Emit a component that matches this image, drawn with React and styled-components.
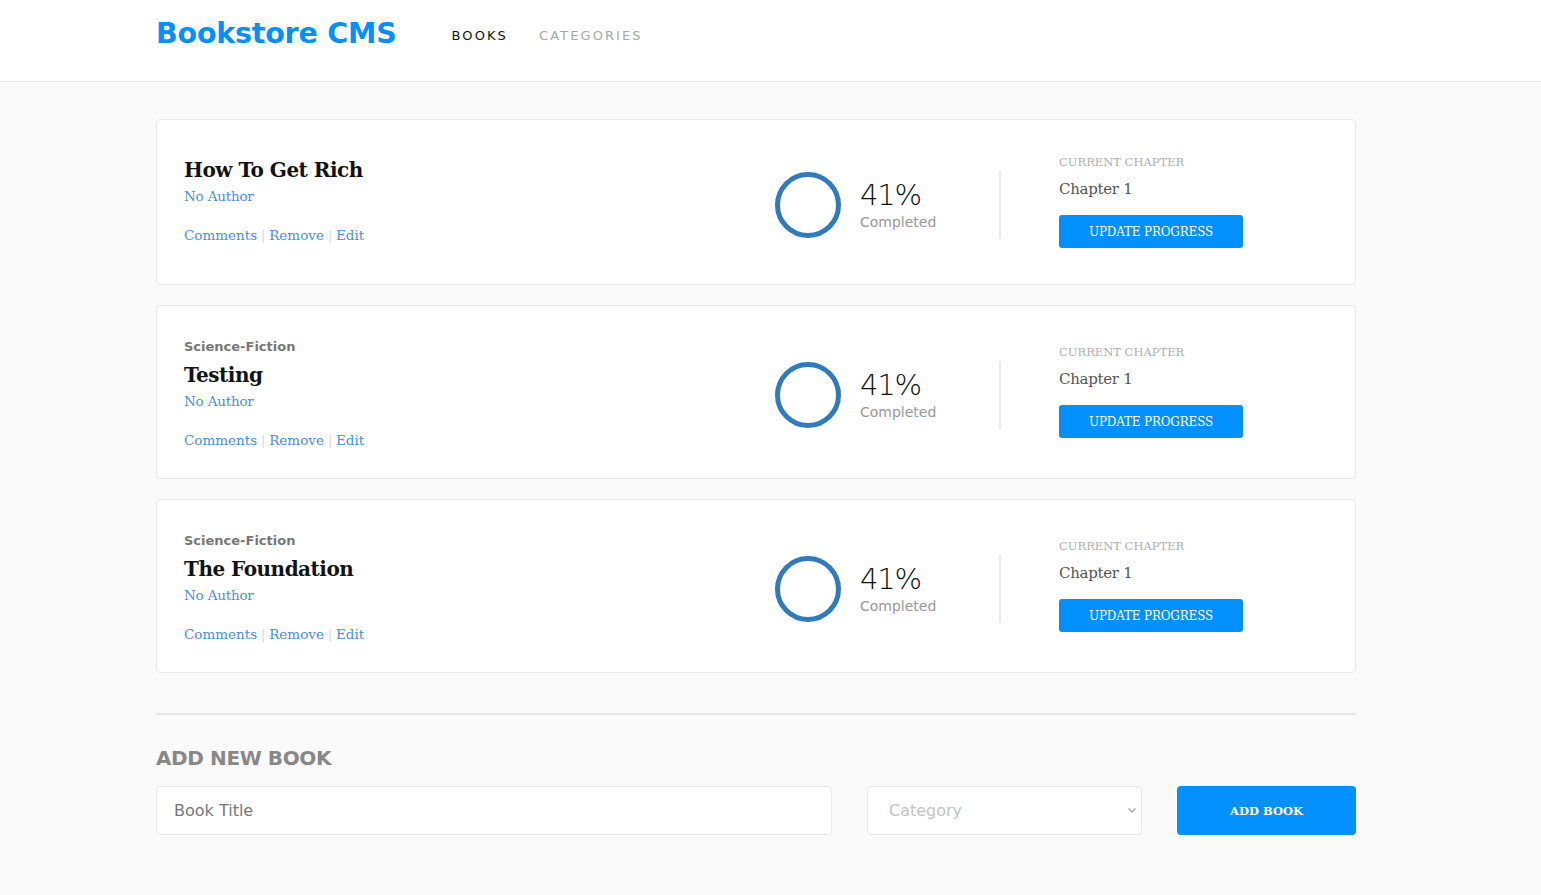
import React from "react";
import styled, { createGlobalStyle } from "styled-components";

const GlobalStyle = createGlobalStyle`
  body {
    margin: 0;
    background: #fafafa;
    font-family: "DejaVu Sans", "Open Sans", sans-serif;
  }
`;

const Header = styled.header`
  box-sizing: border-box;
  background: #fff;
  border-bottom: 1px solid #e8e8e8;
  height: 82px;
  display: flex;
  align-items: center;
  padding: 0 0 15px 156px;
`;

const Logo = styled.h1`
  margin: 0 55px 0 0;
  font-family: "DejaVu Sans", sans-serif;
  font-weight: 700;
  font-size: 28.5px;
  color: #0290ff;
  letter-spacing: -0.2px;
`;

const NavList = styled.ul`
  display: flex;
  gap: 31px;
  list-style: none;
  margin: 5px 0 0;
  padding: 0;
`;

const NavItem = styled.li`
  font-family: "DejaVu Sans", sans-serif;
  font-size: 13px;
  letter-spacing: 2.1px;
  color: ${(p) => (p.$active ? "#121212" : "#a8a8a8")};
`;

const Main = styled.main`
  width: 1200px;
  margin-left: 156px;
  padding: 37px 0 60px;
`;

const BookList = styled.div`
  display: flex;
  flex-direction: column;
  gap: 20px;
`;

const Card = styled.div`
  box-sizing: border-box;
  min-height: 166px;
  background: #fff;
  border: 1px solid #e8e8e8;
  border-radius: 4px;
  padding: 0 27px;
  display: flex;
  align-items: center;
`;

const Info = styled.div`
  flex: 1;
  display: flex;
  flex-direction: column;
  padding: ${(p) => (p.$withGenre ? "33px" : "26px")} 0 30px;
`;

const Genre = styled.div`
  font-family: "DejaVu Sans", sans-serif;
  font-weight: 700;
  font-size: 13px;
  color: #777;
  margin-bottom: 8px;
`;

const Title = styled.h2`
  margin: 0;
  font-family: "DejaVu Serif", serif;
  font-weight: 700;
  font-size: 20px;
  line-height: 26px;
  letter-spacing: -0.5px;
  color: #121212;
`;

const Author = styled.div`
  margin-top: 5px;
  font-family: "DejaVu Serif", serif;
  font-size: 13.5px;
  letter-spacing: -0.2px;
  color: #4a8de6;
`;

const Actions = styled.div`
  margin-top: 23px;
  display: flex;
  align-items: center;
  font-family: "DejaVu Serif", serif;
  font-size: 13.5px;
  letter-spacing: -0.3px;
  color: #4a8de6;
`;

const ActionLink = styled.button`
  border: none;
  background: none;
  padding: 0;
  font: inherit;
  color: inherit;
  cursor: pointer;
`;

const Sep = styled.span`
  color: #d8d8d8;
  margin: 0 4px;
  font-size: 13px;
`;

const Progress = styled.div`
  width: 224px;
  margin-top: 6px;
  display: flex;
  align-items: center;
  gap: 19px;
`;

const Percent = styled.div`
  font-family: "DejaVu Sans", sans-serif;
  font-weight: 300;
  font-size: 29px;
  letter-spacing: -1.2px;
  color: #121212;
  line-height: 1.1;
`;

const Completed = styled.div`
  font-family: "DejaVu Sans", sans-serif;
  font-size: 14px;
  color: #999;
  margin-top: 2px;
`;

const Divider = styled.div`
  width: 2px;
  height: 68px;
  margin-top: 6px;
  background: #e8e8e8;
`;

const Chapter = styled.div`
  width: 269px;
  padding-left: 58px;
  display: flex;
  flex-direction: column;
  align-items: flex-start;
`;

const ChapterLabel = styled.div`
  font-family: "DejaVu Serif", serif;
  font-size: 11.5px;
  line-height: 13px;
  color: #b0b0b0;
`;

const ChapterName = styled.div`
  margin-top: 11px;
  font-family: "DejaVu Serif", serif;
  font-size: 15px;
  line-height: 18px;
  letter-spacing: -0.3px;
  color: #555;
`;

const UpdateButton = styled.button`
  margin-top: 17px;
  width: 184px;
  height: 33px;
  border: none;
  border-radius: 3px;
  background: #0290ff;
  color: #fff;
  font-family: "DejaVu Serif", serif;
  font-size: 12px;
  letter-spacing: -0.2px;
  cursor: pointer;
`;

const Rule = styled.hr`
  margin: 40px 0 0;
  border: none;
  height: 2px;
  background: #e5e5e5;
`;

const FormTitle = styled.h3`
  margin: 31px 0 16px;
  font-family: "DejaVu Sans", sans-serif;
  font-weight: 700;
  font-size: 20px;
  color: #888;
  letter-spacing: -0.4px;
`;

const Form = styled.form`
  display: flex;
  gap: 35px;
`;

const TitleInput = styled.input`
  box-sizing: border-box;
  width: 676px;
  height: 49px;
  border: 1px solid #e8e8e8;
  border-radius: 4px;
  background: #fff;
  padding: 0 17px;
  font-family: "DejaVu Sans", sans-serif;
  font-size: 16px;
  outline: none;
  &::placeholder {
    color: #777;
  }
`;

const SelectWrap = styled.div`
  position: relative;
  width: 275px;
`;

const Select = styled.select`
  box-sizing: border-box;
  width: 100%;
  height: 49px;
  border: 1px solid #e8e8e8;
  border-radius: 4px;
  background: #fff;
  padding: 0 21px;
  appearance: none;
  font-family: "DejaVu Sans", sans-serif;
  font-size: 16px;
  color: #c4c4c4;
  outline: none;
`;

const Chevron = styled.svg`
  position: absolute;
  right: 5px;
  top: 20px;
  pointer-events: none;
`;

const AddButton = styled.button`
  width: 179px;
  height: 49px;
  border: none;
  border-radius: 4px;
  background: #0290ff;
  color: #fff;
  font-family: "DejaVu Serif", serif;
  font-weight: 700;
  font-size: 11.5px;
  cursor: pointer;
`;

const books = [
  { id: 1, title: "How To Get Rich", category: "" },
  { id: 2, title: "Testing", category: "Science-Fiction" },
  { id: 3, title: "The Foundation", category: "Science-Fiction" },
];

const Ring = () => (
  <svg width="66" height="66" viewBox="0 0 66 66">
    <circle cx="33" cy="33" r="30.5" fill="none" stroke="#307bbe" strokeWidth="5" />
  </svg>
);

const BookCard = ({ book }) => (
  <Card>
    <Info $withGenre={!!book.category}>
      {book.category && <Genre>{book.category}</Genre>}
      <Title>{book.title}</Title>
      <Author>No Author</Author>
      <Actions>
        <ActionLink type="button">Comments</ActionLink>
        <Sep>|</Sep>
        <ActionLink type="button">Remove</ActionLink>
        <Sep>|</Sep>
        <ActionLink type="button">Edit</ActionLink>
      </Actions>
    </Info>
    <Progress>
      <Ring />
      <div>
        <Percent>41%</Percent>
        <Completed>Completed</Completed>
      </div>
    </Progress>
    <Divider />
    <Chapter>
      <ChapterLabel>CURRENT CHAPTER</ChapterLabel>
      <ChapterName>Chapter 1</ChapterName>
      <UpdateButton type="button">UPDATE PROGRESS</UpdateButton>
    </Chapter>
  </Card>
);

const App = () => (
  <>
    <GlobalStyle />
    <Header>
      <Logo>Bookstore CMS</Logo>
      <NavList>
        <NavItem $active>BOOKS</NavItem>
        <NavItem>CATEGORIES</NavItem>
      </NavList>
    </Header>
    <Main>
      <BookList>
        {books.map((b) => (
          <BookCard key={b.id} book={b} />
        ))}
      </BookList>
      <Rule />
      <FormTitle>ADD NEW BOOK</FormTitle>
      <Form onSubmit={(e) => e.preventDefault()}>
        <TitleInput placeholder="Book Title" />
        <SelectWrap>
          <Select defaultValue="">
            <option value="" disabled>
              Category
            </option>
            <option value="action">Action</option>
            <option value="science-fiction">Science-Fiction</option>
          </Select>
          <Chevron width="10" height="8" viewBox="0 0 10 8">
            <path d="M1.5 2.5 L5 6 L8.5 2.5" fill="none" stroke="#aaa" strokeWidth="1.5" />
          </Chevron>
        </SelectWrap>
        <AddButton type="submit">ADD BOOK</AddButton>
      </Form>
    </Main>
  </>
);

export default App;
